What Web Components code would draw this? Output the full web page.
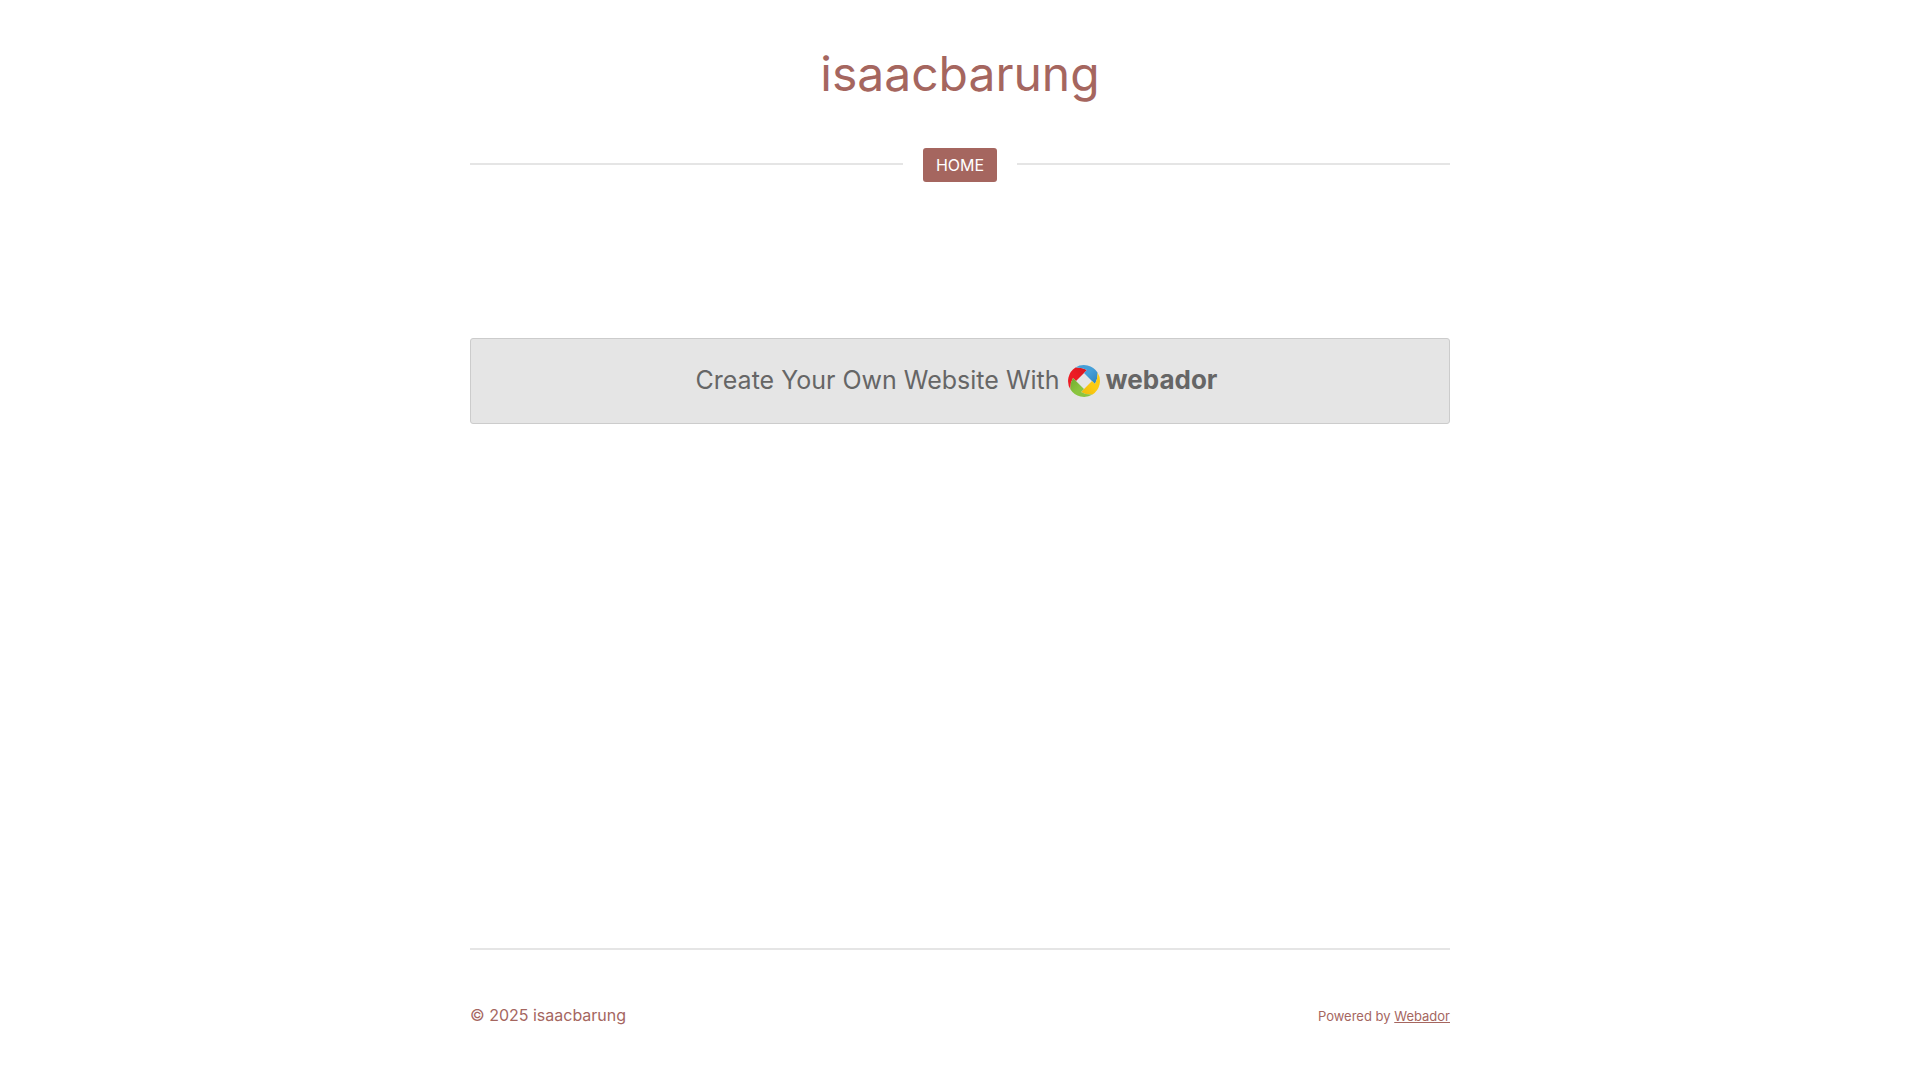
<!DOCTYPE html>
<html lang="en">
<head>
<meta charset="utf-8">
<meta name="viewport" content="width=device-width, initial-scale=1">
<title>isaacbarung</title>
<style>
  body {
    margin: 0;
    font-family: Inter, "Liberation Sans", sans-serif;
    font-size: 16px;
    font-weight: 400;
    line-height: 24px;
    color: #a5665f;
    background: #fff;
    --accent: #a5665f;
    --rule: #e5e5e5;
  }
</style>
</head>
<body>
<site-page>
  <site-title slot="header">isaacbarung</site-title>
  <site-nav slot="header"><nav-link href="#home">HOME</nav-link></site-nav>
  <promo-banner href="#webador">Create Your Own Website With</promo-banner>
  <site-footer slot="footer">© 2025 isaacbarung</site-footer>
</site-page>
<script>
  class BaseElement extends HTMLElement {
    constructor() {
      super();
      this.attachShadow({ mode: "open" }).innerHTML = this.constructor.markup;
    }
    connectedCallback() {
      const link = this.shadowRoot.querySelector("a[data-host-href]");
      if (link) link.href = this.getAttribute("href") || "#";
    }
  }

  customElements.define("site-page", class extends BaseElement {
    static markup = `
      <style>
        :host { display: flex; flex-direction: column; box-sizing: border-box; min-height: 100vh;
                max-width: 980px; margin: 0 auto; padding: 40px 0 52px; }
        main { flex: 1; padding: 156px 0 32px; }
      </style>
      <header><slot name="header"></slot></header>
      <main><slot></slot></main>
      <slot name="footer"></slot>`;
  });

  customElements.define("site-title", class extends BaseElement {
    static markup = `
      <style>
        :host { display: block; text-align: center; }
        h1 { margin: 0; font-size: 48px; line-height: 68px; font-weight: inherit; }
      </style>
      <h1><slot></slot></h1>`;
  });

  customElements.define("site-nav", class extends BaseElement {
    static markup = `
      <style>
        :host { display: block; margin-top: 40px; }
        nav { display: flex; align-items: center; gap: 20px; }
        nav::before, nav::after { content: ""; flex: 1; height: 2px; margin-bottom: 2px; background: var(--rule); }
      </style>
      <nav aria-label="Main"><slot></slot></nav>`;
  });

  customElements.define("nav-link", class extends BaseElement {
    static markup = `
      <style>
        :host { display: block; }
        a { display: block; padding: 5px 13px; border-radius: 3px; background: var(--accent);
            color: #fff; text-decoration: none; }
      </style>
      <a data-host-href><slot></slot></a>`;
  });

  customElements.define("webador-logo", class extends BaseElement {
    static markup = `
      <style>
        :host { display: flex; align-items: center; gap: 6px; padding-right: 7px; }
        svg { display: block; width: 32px; height: 32px; }
        span { font-size: 26px; font-weight: 700; line-height: 30px; padding-bottom: 2px; }
      </style>
      <svg viewBox="0 0 32 32" aria-hidden="true">
        <defs>
          <linearGradient id="r" x1="0" y1="1" x2="1" y2="0"><stop offset=".5" stop-color="#ed1c24"/><stop offset="1" stop-color="#d3181f"/></linearGradient>
          <linearGradient id="b" x1="0" y1="0" x2="1" y2="1"><stop offset=".5" stop-color="#459fd8"/><stop offset="1" stop-color="#2f82bb"/></linearGradient>
          <linearGradient id="y" x1="1" y1="0" x2="0" y2="1"><stop offset=".5" stop-color="#fccb12"/><stop offset="1" stop-color="#edb90c"/></linearGradient>
          <linearGradient id="g" x1="1" y1="1" x2="0" y2="0"><stop offset=".5" stop-color="#8bc53f"/><stop offset="1" stop-color="#70ab2f"/></linearGradient>
        </defs>
        <path fill="url(#r)" d="M19 5 8 16 5 13Q2 18 2.500 24.500A16 16 0 0 1 7.500 2.500Q14 2 19 5Z"/>
        <path fill="url(#b)" d="M27 19 16 8 19 5Q14 2 7.500 2.500A16 16 0 0 1 29.500 7.500Q30 14 27 19Z"/>
        <path fill="url(#y)" d="M13 27 24 16 27 19Q30 14 29.500 7.500A16 16 0 0 1 24.500 29.500Q18 30 13 27Z"/>
        <path fill="url(#g)" d="M5 13 16 24 13 27Q18 30 24.500 29.500A16 16 0 0 1 2.500 24.500Q2 18 5 13Z"/>
      </svg>
      <span>webador</span>`;
  });

  customElements.define("promo-banner", class extends BaseElement {
    static markup = `
      <style>
        :host { display: block; }
        a { display: flex; justify-content: center; align-items: center; flex-wrap: wrap; gap: 8px;
            padding: 26px 20px; border: 1px solid #ccc; border-radius: 3px; background: #e5e5e5;
            color: #666; font-size: 25px; text-decoration: none; }
        span { line-height: 30px; padding-bottom: 2px; }
      </style>
      <a data-host-href><span><slot></slot></span><webador-logo></webador-logo></a>`;
  });

  customElements.define("site-footer", class extends BaseElement {
    static markup = `
      <style>
        footer { display: flex; justify-content: space-between; align-items: baseline; flex-wrap: wrap;
                 gap: 16px; padding-top: 53px; border-top: 2px solid var(--rule); }
        :host { display: block; }
        small { font-size: 13px; }
        a { color: inherit; }
      </style>
      <footer><span><slot></slot></span><small>Powered by <a href="#webador">Webador</a></small></footer>`;
  });
</script>
</body>
</html>
